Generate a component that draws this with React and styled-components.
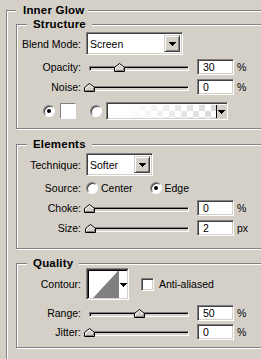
import React from 'react';
import styled, { createGlobalStyle } from 'styled-components';

const GlobalStyle = createGlobalStyle`
  html, body {
    margin: 0;
    padding: 0;
    background: #d4d0c8;
    overflow: hidden;
  }
  body {
    font-family: "Liberation Sans", Arial, sans-serif;
    font-size: 10.5px;
    color: #000;
  }
`;

const Page = styled.div`
  width: 300px;
  padding: 10px 0 0 6px;
`;

const Group = styled.div`
  border: 1px solid #808080;
  box-shadow: inset 1px 1px 0 #fff, 1px 1px 0 #fff;
  margin-top: ${p => p.$top || 0}px;
  padding: 0 0 ${p => p.$bottom || 0}px ${p => p.$left || 0}px;
`;

const Legend = styled.div`
  width: fit-content;
  height: 14px;
  line-height: 14px;
  margin: -8px 0 0 ${p => p.$indent}px;
  padding: 0 ${p => p.$right}px 0 ${p => p.$pad}px;
  background: #d4d0c8;
  font-weight: bold;
  font-size: 11.5px;
  letter-spacing: 0.2px;
`;

const Row = styled.div`
  display: grid;
  grid-template-columns: 64px auto;
  column-gap: 5px;
  align-items: center;
  height: ${p => p.$h}px;
  margin-top: ${p => p.$mt}px;
`;

const Label = styled.span`
  text-align: right;
  white-space: nowrap;
`;

const Controls = styled.div`
  display: flex;
  align-items: center;
  height: 100%;
`;

const Sunken = styled.div`
  box-sizing: border-box;
  border: 1px solid;
  border-color: #808080 #fff #fff #808080;
  box-shadow: inset 1px 1px 0 #404040, inset -1px -1px 0 #d4d0c8;
  background: #fff;
`;

const Select = styled(Sunken)`
  display: flex;
  justify-content: space-between;
  align-items: center;
  width: ${p => p.$w}px;
  height: 23px;
  padding: 2px 2px 2px 3px;
`;

const DropBtn = styled.div`
  width: 16px;
  align-self: stretch;
  box-sizing: border-box;
  background: #d4d0c8;
  border: 1px solid;
  border-color: #d4d0c8 #404040 #404040 #d4d0c8;
  box-shadow: inset 1px 1px 0 #fff, inset -1px -1px 0 #808080;
  display: flex;
  align-items: center;
  justify-content: center;
`;

const Arrow = () => (
  <svg width="7" height="4" viewBox="0 0 7 4" shapeRendering="crispEdges">
    <path d="M0 0h7v1h-1v1h-1v1h-1v1h-1v-1h-1v-1h-1v-1h-1z" fill="#000" />
  </svg>
);

const SliderBox = styled.div`
  position: relative;
  width: 105px;
  align-self: stretch;
  box-sizing: border-box;
  display: flex;
  flex-direction: column;
  justify-content: flex-end;
  padding-bottom: 4px;
`;

const Track = styled.div`
  margin-left: 3px;
  width: 100px;
  height: 5px;
  box-sizing: border-box;
  border: 1px solid;
  border-color: #808080 #fff #fff #808080;
  background: #d4d0c8;
  box-shadow: inset 1px 1px 0 #000;
`;

const Knob = styled.svg`
  position: absolute;
  bottom: 3px;
  left: ${p => p.$x}px;
`;

const Slider = ({ pos }) => (
  <SliderBox>
    <Track />
    <Knob $x={pos - 2} width="11" height="9" viewBox="0 0 11 9">
      <polygon points="0.5,8.5 0.5,4.5 5.5,0.5 10.5,4.5 10.5,8.5" fill="#d4d0c8" stroke="#000" />
      <polyline points="1.5,7.5 1.5,5 5.5,1.8 9.5,5" fill="none" stroke="#fff" />
      <polyline points="1.5,7.5 9.5,7.5 9.5,5" fill="none" stroke="#808080" />
    </Knob>
  </SliderBox>
);

const NumBox = styled(Sunken)`
  width: 37px;
  height: 16px;
  margin-left: 6px;
  padding-left: 5px;
  line-height: 14px;
`;

const Unit = styled.span`
  margin-left: 3px;
`;

const SliderRow = ({ label, value, unit, pos, mt }) => (
  <Row $h={16} $mt={mt}>
    <Label>{label}</Label>
    <Controls>
      <Slider pos={pos} />
      <NumBox>{value}</NumBox>
      <Unit>{unit}</Unit>
    </Controls>
  </Row>
);

const Radio = styled.span`
  position: relative;
  flex: none;
  width: 12px;
  height: 12px;
  box-sizing: border-box;
  border-radius: 50%;
  border: 1px solid;
  border-color: #808080 #fff #fff #808080;
  box-shadow: inset 1px 1px 0 #404040;
  background: #fff;

  &::after {
    content: '';
    display: ${p => (p.$on ? 'block' : 'none')};
    position: absolute;
    left: 3px;
    top: 3px;
    width: 4px;
    height: 4px;
    border-radius: 50%;
    background: #000;
  }
`;

const ColorRow = styled.div`
  display: flex;
  align-items: center;
  height: 18px;
  margin-top: 7px;
  padding-left: 26px;
`;

const Swatch = styled.div`
  width: 16px;
  height: 16px;
  box-sizing: border-box;
  margin: 0 14px 0 5px;
  border: 1px solid;
  border-color: #808080 #fff #fff #808080;
  background: #fff;
`;

const GradientBox = styled(Sunken)`
  display: flex;
  width: 122px;
  height: 18px;
  margin-left: 4px;
  padding: 2px 1px 1px 2px;
`;

const GradientFill = styled.div`
  flex: 1;
  background:
    linear-gradient(to right, #fff 15%, rgba(255, 255, 255, 0)),
    conic-gradient(#d8d8d8 25%, #fff 0 50%, #d8d8d8 0 75%, #fff 0) 0 0 / 12px 12px;
`;

const MiniBtn = styled.div`
  width: 9px;
  border-left: 1px solid #000;
  background: #d4d0c8;
  display: flex;
  align-items: center;
  justify-content: center;
`;

const SourceOpt = styled.label`
  display: flex;
  align-items: center;
  gap: 3px;
  margin-right: 17px;
`;

const ContourBox = styled(Sunken)`
  display: flex;
  width: 43px;
  height: 32px;
  padding: 2px 1px 1px 2px;
  background: #000;
`;

const ContourCurve = styled.svg`
  display: block;
  background: #fff;
`;

const ContourBtn = styled.div`
  flex: 1;
  border-left: 1px solid #808080;
  background: #fff;
  display: flex;
  align-items: center;
  justify-content: center;
`;

const CheckLabel = styled.label`
  display: flex;
  align-items: center;
  gap: 5px;
  margin-left: 12px;
`;

const CheckBox = styled(Sunken)`
  width: 13px;
  height: 13px;
`;

export default function App() {
  return (
    <Page>
      <GlobalStyle />
      <Group $left={9} $bottom={20}>
        <Legend $indent={0} $pad={7} $right={4}>Inner Glow</Legend>

        <Group $top={7} $bottom={8}>
          <Legend $indent={10} $pad={6} $right={6}>Structure</Legend>
          <Row $h={23} $mt={1}>
            <Label>Blend Mode:</Label>
            <Controls>
              <Select $w={97}>
                Screen
                <DropBtn><Arrow /></DropBtn>
              </Select>
            </Controls>
          </Row>
          <SliderRow label="Opacity:" value="30" unit="%" pos={30} mt={4} />
          <SliderRow label="Noise:" value="0" unit="%" pos={0} mt={4} />
          <ColorRow>
            <Radio $on />
            <Swatch />
            <Radio />
            <GradientBox>
              <GradientFill />
              <MiniBtn><Arrow /></MiniBtn>
            </GradientBox>
          </ColorRow>
        </Group>

        <Group $top={15} $bottom={12}>
          <Legend $indent={10} $pad={6} $right={6}>Elements</Legend>
          <Row $h={23} $mt={2}>
            <Label>Technique:</Label>
            <Controls>
              <Select $w={67}>
                Softer
                <DropBtn><Arrow /></DropBtn>
              </Select>
            </Controls>
          </Row>
          <Row $h={12} $mt={6}>
            <Label>Source:</Label>
            <Controls>
              <SourceOpt><Radio />Center</SourceOpt>
              <SourceOpt><Radio $on />Edge</SourceOpt>
            </Controls>
          </Row>
          <SliderRow label="Choke:" value="0" unit="%" pos={0} mt={6} />
          <SliderRow label="Size:" value="2" unit="px" pos={1} mt={4} />
        </Group>

        <Group $top={14} $bottom={7}>
          <Legend $indent={10} $pad={6} $right={6}>Quality</Legend>
          <Row $h={32} $mt={-2}>
            <Label>Contour:</Label>
            <Controls>
              <ContourBox>
                <ContourCurve width="29" height="27" viewBox="0 0 29 27">
                  <polygon points="4,27 29,0 29,27" fill="#808080" />
                </ContourCurve>
                <ContourBtn><Arrow /></ContourBtn>
              </ContourBox>
              <CheckLabel>
                <CheckBox />
                Anti-aliased
              </CheckLabel>
            </Controls>
          </Row>
          <SliderRow label="Range:" value="50" unit="%" pos={50} mt={5} />
          <SliderRow label="Jitter:" value="0" unit="%" pos={0} mt={3} />
        </Group>
      </Group>
    </Page>
  );
}
